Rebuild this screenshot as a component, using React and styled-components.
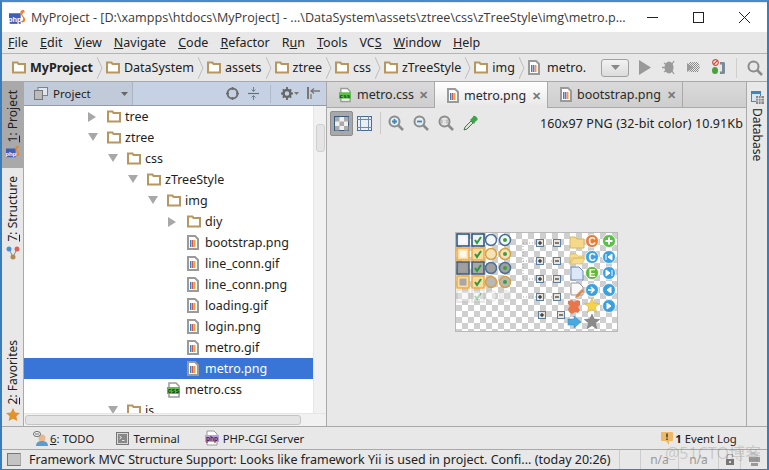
import React from "react";
import styled, { createGlobalStyle } from "styled-components";

const GlobalStyle = createGlobalStyle`
  html, body {
    margin: 0;
    padding: 0;
    background: #fff;
  }
  * {
    box-sizing: border-box;
  }
`;

const Window = styled.div`
  position: relative;
  width: 769px;
  height: 470px;
  overflow: hidden;
  display: flex;
  flex-direction: column;
  padding-top: 1px;
  background: #e8e8e8;
  border: 1px solid #3a7dbd;
  border-top-width: 2px;
  border-left-width: 2px;
  border-right-width: 2px;
  border-top-color: #4a8ac8;
  font-family: "Noto Sans", "Open Sans", sans-serif;
  font-size: 12.5px;
  color: #222;
  white-space: nowrap;
`;

const TitleBar = styled.div`
  height: 29px;
  flex: none;
  background: #fff;
  display: flex;
  align-items: center;
  padding-left: 7px;
  font-family: "Open Sans", sans-serif;
  font-size: 12.6px;
  color: #3a3a3a;
`;

const TitleText = styled.span`
  flex: 1;
  padding-left: 5px;
`;

const WinButton = styled.div`
  width: 46px;
  height: 29px;
  display: flex;
  align-items: center;
  justify-content: center;
`;

const MenuBar = styled.div`
  height: 22px;
  flex: none;
  display: flex;
  align-items: center;
  gap: 12px;
  padding-left: 6px;
  border-bottom: 1px solid #b4b4b4;
`;

const NavBar = styled.div`
  height: 28px;
  flex: none;
  display: flex;
  align-items: center;
  padding-left: 10px;
  border-bottom: 1px solid #a9a9a9;
`;

const Crumb = styled.div`
  display: flex;
  flex: none;
  align-items: center;
  gap: 4px;
  font-weight: ${(p) => (p.$bold ? 700 : 400)};
`;

const Chevron = styled.svg`
  margin: 0 3px 0 4px;
  flex: none;
`;

const ComboButton = styled.div`
  width: 28px;
  height: 18px;
  flex: none;
  margin-left: 15px;
  margin-right: 10px;
  border: 1px solid #a0a0a0;
  border-radius: 3px;
  background: linear-gradient(#f2f2f2, #dcdcdc);
  display: flex;
  align-items: center;
  justify-content: center;
`;

const NavActions = styled.div`
  display: flex;
  flex: none;
  align-items: center;
  gap: 10px;
`;

const NavDivider = styled.div`
  width: 1px;
  height: 20px;
  background: #cfcfcf;
`;

const Main = styled.div`
  flex: 1;
  min-height: 0;
  display: flex;
`;

const SideStrip = styled.div`
  width: ${(p) => p.$width}px;
  flex: none;
  display: flex;
  flex-direction: column;
  font-size: 12px;
  ${(p) => (p.$right ? "border-left: 1px solid #a9a9a9;" : "border-right: 1px solid #a9a9a9;")}
`;

const StripButton = styled.div`
  display: flex;
  flex-direction: column;
  align-items: center;
  gap: ${(p) => p.$gap || 4}px;
  background: ${(p) => (p.$active ? "#a9a9a9" : "transparent")};
  padding: ${(p) => p.$pad || "0"};
  margin-top: ${(p) => p.$top || 0}px;
`;

const VerticalText = styled.span`
  writing-mode: vertical-rl;
  transform: ${(p) => (p.$down ? "none" : "rotate(180deg)")};
  line-height: 20px;
`;

const ProjectPanel = styled.div`
  width: 303px;
  flex: none;
  position: relative;
  display: flex;
  flex-direction: column;
  background: #fff;
  border-right: 1px solid #a9a9a9;
`;

const PanelHeader = styled.div`
  height: 24px;
  flex: none;
  display: flex;
  align-items: center;
  background: #c6d2e3;
  border-bottom: 1px solid #9a9a9a;
`;

const PanelCombo = styled.div`
  width: 109px;
  height: 23px;
  flex: none;
  display: flex;
  align-items: center;
  padding-left: 10px;
  gap: 5px;
  font-size: 11.5px;
  background: #c0cad8;
  border-right: 1px solid #a9b4c4;
  margin-right: 93px;
`;

const ComboLabel = styled.span`
  flex: 1;
`;

const HeaderTools = styled.div`
  display: flex;
  align-items: center;
  gap: 8px;
`;

const HeaderDivider = styled.div`
  width: 1px;
  height: 18px;
  background: #aeb9c9;
  margin: 0 2px;
`;

const TreeArea = styled.div`
  flex: 1;
  min-height: 0;
  display: flex;
  overflow: hidden;
`;

const Tree = styled.div`
  flex: 1;
  min-width: 0;
  overflow: hidden;
`;

const Row = styled.div`
  height: 21px;
  display: flex;
  align-items: center;
  padding-left: ${(p) => 64 + p.$depth * 20}px;
  background: ${(p) => (p.$selected ? "#3875d7" : "transparent")};
  color: ${(p) => (p.$selected ? "#fff" : "#1e1e1e")};
`;

const ArrowSlot = styled.div`
  width: 19px;
  flex: none;
  display: flex;
  align-items: center;
`;

const IconSlot = styled.div`
  width: 18px;
  flex: none;
  display: flex;
  align-items: center;
`;

const VScrollTrack = styled.div`
  width: 13px;
  flex: none;
  background: #f1f1f1;
  border-left: 1px solid #e6e6e6;
  padding: 18px 1px 0 2px;
`;

const VScrollThumb = styled.div`
  height: 28px;
  background: #e4e4e4;
  border: 1px solid #cfcfcf;
  border-radius: 3px;
`;

const HScrollTrack = styled.div`
  position: absolute;
  left: 0;
  right: 0;
  bottom: 0;
  height: 13px;
  background: #f1f1f1;
  border-top: 1px solid #e6e6e6;
  padding: 1px 25px 1px 1px;
`;

const HScrollThumb = styled.div`
  height: 10px;
  background: #e4e4e4;
  border: 1px solid #c4c4c4;
  border-radius: 3px;
`;

const Editor = styled.div`
  flex: 1;
  min-width: 0;
  display: flex;
  flex-direction: column;
`;

const TabBar = styled.div`
  height: 26px;
  flex: none;
  display: flex;
  padding-left: 3px;
  background: linear-gradient(#dadada, #cecece);
  border-bottom: 1px solid #a9a9a9;
`;

const Tab = styled.div`
  display: flex;
  align-items: center;
  gap: 5px;
  width: ${(p) => p.$width}px;
  padding-left: ${(p) => p.$pad}px;
  border-right: 1px solid #a9a9a9;
  background: ${(p) => (p.$active ? "linear-gradient(#ffffff, #e6e6e6)" : "transparent")};
  margin-bottom: ${(p) => (p.$active ? "-1px" : "0")};
  color: #2a2a2a;
`;

const TabClose = styled.span`
  font-size: 11px;
  font-weight: 700;
  color: #777;
  margin-left: auto;
  margin-right: 6px;
`;

const ViewerToolbar = styled.div`
  height: 30px;
  flex: none;
  display: flex;
  align-items: center;
  padding-left: 3px;
`;

const ToggleButton = styled.div`
  width: 23px;
  height: 25px;
  display: flex;
  align-items: center;
  justify-content: center;
  border-radius: 2px;
  background: ${(p) => (p.$pressed ? "#a8a8a8" : "transparent")};
  border: 1px solid ${(p) => (p.$pressed ? "#8e8e8e" : "transparent")};
`;

const ToolDivider = styled.div`
  width: 1px;
  height: 22px;
  background: #cacaca;
  margin: 0 7px 0 4px;
`;

const ZoomTools = styled.div`
  display: flex;
  align-items: center;
  gap: 9px;
`;

const ImageInfo = styled.div`
  margin-left: auto;
  margin-right: 3px;
  letter-spacing: 0.1px;
  color: #222;
`;

const Canvas = styled.div`
  flex: 1;
  display: flex;
  align-items: center;
  justify-content: center;
  padding-bottom: 1px;
`;

const ToolWindowBar = styled.div`
  height: 24px;
  flex: none;
  display: flex;
  align-items: center;
  padding-left: 31px;
  border-top: 1px solid #a9a9a9;
  border-bottom: 1px solid #a9a9a9;
  font-size: 11.3px;
`;

const ToolButton = styled.div`
  display: flex;
  align-items: center;
  gap: ${(p) => p.$gap || 4}px;
  margin-right: ${(p) => p.$after || 0}px;
`;

const StatusBar = styled.div`
  height: 19px;
  flex: none;
  display: flex;
  align-items: center;
  padding-left: 5px;
  font-size: 12.5px;
`;

const StatusSquare = styled.div`
  width: 14px;
  height: 13px;
  background: #c4c4c4;
  border: 1px solid #777;
  border-right-color: #aaa;
  margin-right: 8px;
`;

const StatusText = styled.span`
  flex: 1;
`;

const StatusCell = styled.div`
  width: ${(p) => p.$width}px;
  height: 100%;
  display: flex;
  align-items: center;
  justify-content: center;
  border-left: 1px solid #cdcdcd;
  color: #9a9a9a;
  font-size: 12px;
`;

const Watermark = styled.div`
  position: absolute;
  right: 6px;
  bottom: 5px;
  font-family: "Open Sans", "Noto Sans CJK SC", sans-serif;
  font-size: 16px;
  color: rgba(120, 120, 120, 0.3);
`;

const Folder = () => (
  <svg width="14" height="13" viewBox="0 0 14 13">
    <path d="M1 11.500V1.500h4.500l1 1.500H13v8.500z" fill="#fff" stroke="#b8965f" strokeWidth="2" />
  </svg>
);

const Bars = ({ x, y }) => (
  <g>
    <rect x={x} y={y} width="1.500" height="7" fill="#3b7fc4" />
    <rect x={x + 2} y={y} width="1.500" height="7" fill="#d9534f" />
    <rect x={x + 4} y={y} width="1.500" height="7" fill="#e6a23c" />
  </g>
);

const PngFile = () => (
  <svg width="12" height="15" viewBox="0 0 12 15">
    <path d="M1 1h7l3 3v10H1z" fill="#fff" stroke="#9a9a9a" strokeWidth="2" />
    <Bars x={3} y={5} />
  </svg>
);

const CssFile = ({ size = 14 }) => (
  <svg width={size} height="16" viewBox="0 0 14 16">
    <path d="M2 1h7l3 3v11H2z" fill="#fff" stroke="#9a9a9a" strokeWidth="1.500" />
    <rect x="0" y="5" width="13" height="7" fill="#5ec04a" />
    <text x="6.500" y="11" textAnchor="middle" fontSize="6.500" fontWeight="700" fontFamily="Liberation Mono" fill="#0c3a0c">css</text>
  </svg>
);

const ArrowRight = () => (
  <svg width="9" height="10" viewBox="0 0 9 10"><path d="M0 0l8 5-8 5z" fill="#a8a8a8" /></svg>
);

const ArrowDown = () => (
  <svg width="10" height="9" viewBox="0 0 10 9"><path d="M0 0h10L5 8z" fill="#a8a8a8" /></svg>
);

const PhpLogo = ({ w = 15 }) => (
  <svg width={w} height={w} viewBox="0 0 16 16">
    <rect x="0" y="4" width="11" height="10" fill="#3d5fb8" />
    <text x="5.500" y="12" textAnchor="middle" fontSize="7" fontWeight="700" fontFamily="Liberation Sans" fill="#fff">php</text>
    <path d="M14 1c-3 0-4 2-3 4l2 3c1 2 0 3-2 4 3 2 5-1 4-3l-2-3c-1-1 0-3 2-3z" fill="#e8842c" />
  </svg>
);

const Search = ({ size = 16, sign }) => (
  <svg width={size} height={size} viewBox="0 0 16 16">
    <circle cx="6.500" cy="6.500" r="5" fill={sign === "plus" || sign === "minus" ? "#e6eef5" : "none"} stroke="#8c8c8c" strokeWidth="2" />
    <path d="M10 10l5 5" stroke="#8c8c8c" strokeWidth="2.500" />
    {sign === "plus" && <path d="M4 6.500h5M6.500 4v5" stroke="#3f86b5" strokeWidth="1.800" />}
    {sign === "minus" && <path d="M4 6.500h5" stroke="#3f86b5" strokeWidth="1.800" />}
    {sign === "one" && <path d="M4 4.500v4M7 5v.5M7 7.500v.5M9 4.500v4" stroke="#999" strokeWidth="1" />}
  </svg>
);

const Bug = () => (
  <svg width="15" height="15" viewBox="0 0 15 15">
    <ellipse cx="8" cy="7.500" rx="4.500" ry="6" fill="#9a9a9a" />
    <path d="M3 3l3 2M1 7.500h4M3 12l3-2M13 1l-2 3M13 14l-2-3" stroke="#9a9a9a" strokeWidth="1.300" />
  </svg>
);

const Coverage = () => (
  <svg width="15" height="15" viewBox="0 0 15 15">
    <defs>
      <pattern id="cov" width="2" height="2" patternUnits="userSpaceOnUse">
        <rect width="1" height="1" fill="#8c8c8c" />
        <rect x="1" y="1" width="1" height="1" fill="#8c8c8c" />
      </pattern>
    </defs>
    <path d="M1 5l3-3h8l2 5-2 5H4l-3-3z" fill="url(#cov)" />
    <path d="M1 3l6 4.500-6 4.500z" fill="#9a9a9a" />
  </svg>
);

const StopBug = () => (
  <svg width="15" height="17" viewBox="0 0 15 17">
    <circle cx="4.500" cy="3.500" r="2.800" fill="#fff" stroke="#d84a3a" strokeWidth="1.200" />
    <path d="M2.500 5.500l4-4" stroke="#d84a3a" strokeWidth="1.200" />
    <ellipse cx="4" cy="11.500" rx="3" ry="3.500" fill="#4aa03a" />
    <path d="M9 3h3.500c1.500 0 1.500 1 1.500 2v8c0 1 0 2-1.500 2H9v-2.500h2v-7H9z" fill="#7a8a96" />
  </svg>
);

const TargetIcon = () => (
  <svg width="13" height="13" viewBox="0 0 13 13">
    <circle cx="6.500" cy="6.500" r="5" fill="none" stroke="#6e6e6e" strokeWidth="2" />
    <path d="M6.500 0v3M6.500 10v3M0 6.500h3M10 6.500h3" stroke="#6e6e6e" strokeWidth="1.500" />
  </svg>
);

const CollapseIcon = () => (
  <svg width="13" height="13" viewBox="0 0 13 13">
    <path d="M1 6.500h11" stroke="#6e6e6e" strokeWidth="1.200" />
    <path d="M6.500 0v4M4.500 2.500l2 2 2-2M6.500 13V9M4.500 10.500l2-2 2 2" fill="none" stroke="#6e7f92" strokeWidth="1" />
  </svg>
);

const GearIcon = () => (
  <svg width="18" height="13" viewBox="0 0 18 13">
    <circle cx="6" cy="6.500" r="3.500" fill="none" stroke="#666" strokeWidth="2.500" />
    <path d="M6 0v2.500M6 10.500V13M0 6.500h2.500M9.500 6.500H12M1.800 2.300l1.800 1.800M8.400 8.900l1.800 1.800M10.200 2.300L8.400 4.100M3.600 8.900l-1.800 1.800" stroke="#666" strokeWidth="1.800" />
    <path d="M13 5h5l-2.500 3z" fill="#777" />
  </svg>
);

const HideIcon = () => (
  <svg width="13" height="13" viewBox="0 0 13 13">
    <rect x="0" y="0" width="2" height="12" fill="#777" />
    <path d="M4 4h9M7 1.500L4 4l3 2.500" fill="none" stroke="#777" strokeWidth="1.300" />
    <rect x="3" y="7" width="2" height="5" fill="#999" />
  </svg>
);

const CheckerIcon = () => (
  <svg width="15" height="15" viewBox="0 0 15 15">
    <rect x="0.500" y="0.500" width="14" height="14" fill="#f0f0f0" stroke="#3a5a80" />
    <rect x="1" y="1" width="4.500" height="4.500" fill="#aaa" />
    <rect x="10" y="1" width="4.500" height="4.500" fill="#aaa" />
    <rect x="5.500" y="5.500" width="4.500" height="4.500" fill="#aaa" />
    <rect x="1" y="10" width="4.500" height="4.500" fill="#aaa" />
    <rect x="10" y="10" width="4.500" height="4.500" fill="#aaa" />
  </svg>
);

const GridIcon = () => (
  <svg width="15" height="15" viewBox="0 0 15 15">
    <rect x="0.500" y="0.500" width="14" height="14" fill="#e8eef5" stroke="#4a6a90" />
    <path d="M3.500 0v15M11.500 0v15M0 3.500h15M0 11.500h15" stroke="#6e88a8" />
  </svg>
);

const Eyedropper = () => (
  <svg width="16" height="16" viewBox="0 0 16 16">
    <path d="M1 15l1-3 6-6 2 2-6 6z" fill="#d8e8d0" stroke="#55705a" />
    <path d="M7 5l4 4 1.500-2.500 2-1.500c1-1.500-2.500-5-4-4L9 3z" fill="#3fa34a" />
  </svg>
);

const DatabaseIcon = () => (
  <svg width="13" height="13" viewBox="0 0 13 13">
    <rect x="0.500" y="0.500" width="9" height="10" fill="#d6e6f4" stroke="#3f86c0" />
    <rect x="0" y="0" width="10" height="3" fill="#3f86c0" />
    <rect x="5" y="5" width="8" height="8" fill="#8a8a8a" />
    <path d="M5 7.500h8M5 10h8M7.500 5v8M10 5v8" stroke="#e8e8e8" strokeWidth="0.700" />
  </svg>
);

const StructureIcon = () => (
  <svg width="14" height="14" viewBox="0 0 14 14">
    <path d="M3 3l4 8 4-8" fill="none" stroke="#888" strokeWidth="1" />
    <circle cx="3" cy="3" r="2.500" fill="#4d8fd0" />
    <circle cx="11" cy="3" r="2.500" fill="#d9635a" />
    <circle cx="7" cy="11" r="2.500" fill="#b08a50" />
  </svg>
);

const StarIcon = () => (
  <svg width="14" height="13" viewBox="0 0 14 13">
    <path d="M7 0l2.100 4.400 4.900.6-3.600 3.300.9 4.700L7 10.700 2.700 13l.9-4.700L0 5l4.900-.6z" fill="#e3932c" />
  </svg>
);

const TodoIcon = () => (
  <svg width="15" height="15" viewBox="0 0 15 15">
    <circle cx="9" cy="7" r="3.500" fill="#e8b888" />
    <path d="M3 15c0-4 3-5 6-5s6 1 6 5z" fill="#5b9bd0" />
    <ellipse cx="4" cy="3" rx="3.500" ry="2.500" fill="#fff" stroke="#666" />
    <path d="M2 3h4" stroke="#666" />
  </svg>
);

const TerminalIcon = () => (
  <svg width="13" height="13" viewBox="0 0 13 13">
    <rect x="0.500" y="0.500" width="12" height="12" fill="#d8d8d8" stroke="#777" />
    <rect x="2" y="2" width="9" height="9" fill="#888" />
    <path d="M3.500 4l2 1.500-2 1.500M6 8.500h2.500" fill="none" stroke="#fff" strokeWidth="0.800" />
  </svg>
);

const PhpFile = () => (
  <svg width="14" height="16" viewBox="0 0 14 16">
    <path d="M2 1h7l3 3v11H2z" fill="#fff" stroke="#9a9a9a" />
    <rect x="0" y="5" width="14" height="7" fill="#b3a3e6" />
    <text x="7" y="11" textAnchor="middle" fontSize="6.500" fontWeight="700" fontFamily="Liberation Sans" fill="#2a2060">php</text>
  </svg>
);

const EventIcon = () => (
  <svg width="12" height="13" viewBox="0 0 12 13">
    <path d="M1 0h10a1 1 0 0 1 1 1v7a1 1 0 0 1-1 1H8v4L5 9H1a1 1 0 0 1-1-1V1a1 1 0 0 1 1-1z" fill="#eeb866" />
    <path d="M6 1.500v4M6 6.500v1.500" stroke="#333" strokeWidth="1.400" />
  </svg>
);

const LockIcon = () => (
  <svg width="10" height="11" viewBox="0 0 10 11">
    <path d="M2 5V3a3 3 0 0 1 6 0" fill="none" stroke="#999" strokeWidth="1.200" />
    <rect x="1" y="5" width="8" height="6" fill="#777" />
    <rect x="4" y="7" width="2" height="2" fill="#ddd" />
  </svg>
);

const HeapIcon = () => (
  <svg width="13" height="15" viewBox="0 0 13 15">
    <path d="M1 1h11M3 3h7" stroke="#bbb" />
    <path d="M1 5h11v5H1z" fill="#9a9a9a" />
    <path d="M3 11h7v3H3z" fill="#999" />
  </svg>
);

/* --- the sprite sheet shown in the image viewer --- */

const boxRows = [
  { y: 7, fill: "#eef2f6", inner: "#f8f8f8", stroke: "#24507f", radio: "#f4f7fa", ring: "#4a6f96" },
  { y: 21, fill: "#fbdca0", inner: "#fff8e8", stroke: "#efab45", radio: "#f6e2b8", ring: "#d8a040" },
  { y: 35, fill: "#9c9c9c", inner: "#a0a0a0", stroke: "#3f5a78", radio: "#a0a0a0", ring: "#4a6f96" },
  { y: 49, fill: "#fbdca0", inner: "#a8a8a8", stroke: "#efab45", radio: "#b8b8b8", ring: "#d8a040" },
];

const Box = ({ x, y, fill, inner, stroke, check, faded }) => (
  <g opacity={faded ? 0.4 : 1}>
    <rect x={x - 6} y={y - 6} width="12" height="12" fill={fill} stroke={stroke} strokeWidth="1.500" />
    {inner && <rect x={x - 3.500} y={y - 3.500} width="7" height="7" fill={inner} />}
    {check && <path d={`M${x - 3} ${y}l2 3 4-6`} fill="none" stroke="#2a9a3a" strokeWidth="2" />}
  </g>
);

const Radio = ({ x, y, fill, stroke, dot, faded }) => (
  <g opacity={faded ? 0.4 : 1}>
    <circle cx={x} cy={y} r="5.500" fill={fill} stroke={stroke} strokeWidth="1.500" />
    {dot && <circle cx={x} cy={y} r="2" fill="#3aa03a" />}
  </g>
);

const PlusMinus = ({ x, y, plus }) => (
  <g>
    <rect x={x - 3.500} y={y - 3.500} width="7" height="7" fill="#e8e4dc" stroke="#5a7fa0" />
    <path d={`M${x - 2} ${y}h4${plus ? `M${x} ${y - 2}v4` : ""}`} stroke="#111" strokeWidth="1" />
  </g>
);

const Ball = ({ x, y, fill, children }) => (
  <g>
    <circle cx={x} cy={y} r="6.500" fill={fill} stroke="#fff" strokeWidth="0.800" />
    {children}
  </g>
);

const starPath = (x, y, r) => {
  const pts = [];
  for (let i = 0; i < 10; i++) {
    const rad = i % 2 === 0 ? r : r * 0.45;
    const a = -Math.PI / 2 + (i * Math.PI) / 5;
    pts.push(`${(x + rad * Math.cos(a)).toFixed(1)},${(y + rad * Math.sin(a)).toFixed(1)}`);
  }
  return `M${pts.join("L")}z`;
};

const ballLetter = (x, y, s) => (
  <text x={x} y={y + 3.500} textAnchor="middle" fontSize="10" fontWeight="700" fontFamily="Liberation Sans" fill="#fff">{s}</text>
);

const Sprite = () => (
  <svg width="163" height="100" viewBox="-1 -1 163 100">
    <defs>
      <pattern id="checks" width="12" height="12" patternUnits="userSpaceOnUse">
        <rect width="12" height="12" fill="#fff" />
        <rect width="6" height="6" fill="#cfcfcf" />
        <rect x="6" y="6" width="6" height="6" fill="#cfcfcf" />
      </pattern>
    </defs>
    <rect x="-0.500" y="-0.500" width="162" height="99" fill="url(#checks)" stroke="#b9b9b9" />
    {boxRows.map((r) => (
      <g key={r.y}>
        <Box x={7} y={r.y} fill={r.fill} inner={r.inner} stroke={r.stroke} />
        <Box x={22} y={r.y} fill={r.y === 35 ? "#a8a8a8" : r.fill} stroke={r.stroke} check />
        <Radio x={35} y={r.y} fill={r.radio} stroke={r.ring} />
        <Radio x={49} y={r.y} fill={r.radio} stroke={r.ring} dot />
      </g>
    ))}
    <Box x={7} y={63} fill="#f0f0f0" stroke="#bbb" faded />
    <Box x={22} y={63} fill="#f0f0f0" stroke="#bbb" check faded />
    <Radio x={35} y={63} fill="#fff" stroke="#ccc" faded />
    <Radio x={49} y={63} fill="#ddd" stroke="#ccc" faded />
    {[10, 28, 46, 64].map((y) => (
      <g key={y}>
        <path d={`M67 ${y}h14M99 ${y}h-6`} stroke="#aaa" strokeDasharray="1 2" />
        <PlusMinus x={84} y={y} plus />
        <PlusMinus x={101} y={y} />
      </g>
    ))}
    <path d="M67 10v36" stroke="#aaa" strokeDasharray="1 2" />
    <PlusMinus x={86} y={82} plus />
    <PlusMinus x={105} y={82} />
    <path d="M114 4h5l2 2h7v9h-14z" fill="#f4d98a" stroke="#d8b860" />
    <path d="M114 29v-8h6l2 2h6v2h-10l-3 5zM113 31l3-6h13l-3 6z" fill="#f6dc90" stroke="#d8b860" strokeWidth="0.700" />
    <path d="M115 34h8l4 4v9h-12z" fill="#dce8f8" stroke="#6a8ac0" />
    <path d="M115 50h8l4 4v8h-12z" fill="#f8f8f8" stroke="#999" />
    <path d="M120 62l6-6 2 2-6 6-3 1z" fill="#e08a4a" />
    <path d="M112 68l4-1 2 2 3-2 3 1v4l-2 2 2 3-2 3-3-1-3 2-3-2-1-3 2-3-2-2z" fill="#e8764a" />
    <path d="M112 86h6v-3l7 6-7 6v-3h-6z" fill="#4aa8e0" stroke="#2a88c0" strokeWidth="0.500" />
    <Ball x={136} y={8} fill="#e87a3a">{ballLetter(136, 8, "C")}</Ball>
    <Ball x={136} y={24} fill="#3aa0e0">{ballLetter(136, 24, "C")}</Ball>
    <Ball x={136} y={40} fill="#5ab83a">{ballLetter(136, 40, "E")}</Ball>
    <Ball x={136} y={57} fill="#3aa0e0"><path d="M132 57h5M135 54l3 3-3 3" fill="none" stroke="#fff" strokeWidth="1.600" /></Ball>
    <path d={starPath(136, 73, 8)} fill="#f4d24a" stroke="#d8a83a" strokeWidth="0.500" />
    <path d={starPath(136, 89, 8)} fill="#8a8a8a" stroke="#6a6a6a" strokeWidth="0.500" />
    <Ball x={153} y={8} fill="#5ac04a"><path d="M149.500 8h7M153 4.500v7" stroke="#fff" strokeWidth="2" /></Ball>
    <Ball x={153} y={24} fill="#3aa0e0"><path d="M150 21v6M156 21l-4 3 4 3z" fill="#fff" stroke="#fff" /></Ball>
    <Ball x={153} y={40} fill="#3aa0e0"><path d="M156 37v6M150 37l4 3-4 3z" fill="#fff" stroke="#fff" /></Ball>
    <Ball x={153} y={57} fill="#3aa0e0"><path d="M155 54l-4 3 4 3z" fill="#fff" stroke="#fff" /></Ball>
    <Ball x={153} y={73} fill="#3aa0e0"><path d="M151 70l4 3-4 3z" fill="#fff" stroke="#fff" /></Ball>
  </svg>
);

const crumbs = ["DataSystem", "assets", "ztree", "css", "zTreeStyle", "img"];
const menus = [
  ["F", "ile"], ["E", "dit"], ["V", "iew"], ["N", "avigate"], ["C", "ode"], ["R", "efactor"],
  ["R", "u", "n"], ["T", "ools"], ["VC", "S", ""], ["W", "indow"], ["H", "elp"],
];

const treeRows = [
  { depth: 0, label: "tree", kind: "closed" },
  { depth: 0, label: "ztree", kind: "open" },
  { depth: 1, label: "css", kind: "open" },
  { depth: 2, label: "zTreeStyle", kind: "open" },
  { depth: 3, label: "img", kind: "open" },
  { depth: 4, label: "diy", kind: "closed" },
  { depth: 4, label: "bootstrap.png", kind: "png" },
  { depth: 4, label: "line_conn.gif", kind: "png" },
  { depth: 4, label: "line_conn.png", kind: "png" },
  { depth: 4, label: "loading.gif", kind: "png" },
  { depth: 4, label: "login.png", kind: "png" },
  { depth: 4, label: "metro.gif", kind: "png" },
  { depth: 4, label: "metro.png", kind: "png", selected: true },
  { depth: 3, label: "metro.css", kind: "css" },
  { depth: 1, label: "js", kind: "open" },
];

const MenuLabel = ({ item }) => {
  if (item[0] === "R" && item.length === 3) return <span>R<u>u</u>n</span>;
  if (item[0] === "VC") return <span>VC<u>S</u></span>;
  return <span><u>{item[0]}</u>{item[1]}</span>;
};

const TreeRow = ({ row }) => (
  <Row $depth={row.depth} $selected={row.selected}>
    <ArrowSlot>
      {row.kind === "closed" && <ArrowRight />}
      {row.kind === "open" && <ArrowDown />}
    </ArrowSlot>
    <IconSlot>
      {(row.kind === "closed" || row.kind === "open") && <Folder />}
      {row.kind === "png" && <PngFile />}
      {row.kind === "css" && <CssFile />}
    </IconSlot>
    {row.label}
  </Row>
);

const ChevronMark = () => (
  <Chevron width="6" height="22" viewBox="0 0 6 22">
    <path d="M0 0l5 11-5 11" fill="none" stroke="#bdbdbd" />
  </Chevron>
);

const App = () => {
  return (
    <Window>
      <GlobalStyle />
      <TitleBar>
        <PhpLogo w={17} />
        <TitleText>MyProject - [D:\xampps\htdocs\MyProject] - ...\DataSystem\assets\ztree\css\zTreeStyle\img\metro.p...</TitleText>
        <WinButton>
          <svg width="11" height="11" viewBox="0 0 11 11"><path d="M0 5.500h11" stroke="#222" /></svg>
        </WinButton>
        <WinButton>
          <svg width="11" height="11" viewBox="0 0 11 11"><rect x="0.500" y="0.500" width="10" height="10" fill="none" stroke="#222" /></svg>
        </WinButton>
        <WinButton>
          <svg width="11" height="11" viewBox="0 0 11 11"><path d="M0 0l11 11M11 0L0 11" stroke="#222" /></svg>
        </WinButton>
      </TitleBar>

      <MenuBar>
        {menus.map((m) => (
          <MenuLabel key={m.join("")} item={m} />
        ))}
      </MenuBar>

      <NavBar>
        <Crumb $bold>
          <Folder />
          MyProject
        </Crumb>
        <ChevronMark />
        {crumbs.map((c) => (
          <React.Fragment key={c}>
            <Crumb>
              <Folder />
              {c}
            </Crumb>
            <ChevronMark />
          </React.Fragment>
        ))}
        <Crumb>
          <PngFile />
          &nbsp;metro.
        </Crumb>
        <ComboButton>
          <svg width="9" height="5" viewBox="0 0 9 5"><path d="M0 0h9L4.500 5z" fill="#888" /></svg>
        </ComboButton>
        <NavActions>
          <svg width="12" height="15" viewBox="0 0 12 15"><path d="M0 0l12 7.500L0 15z" fill="#999" /></svg>
          <Bug />
          <Coverage />
          <StopBug />
          <NavDivider />
          <Search size={16} />
        </NavActions>
      </NavBar>

      <Main>
        <SideStrip $width={22}>
          <StripButton $active $pad="8px 0 9px" $gap={3}>
            <VerticalText><u>1</u>: Project</VerticalText>
            <PhpLogo w={14} />
          </StripButton>
          <StripButton $top={8}>
            <VerticalText><u>7</u>: Structure</VerticalText>
            <StructureIcon />
          </StripButton>
          <StripButton $top={80}>
            <VerticalText><u>2</u>: Favorites</VerticalText>
            <StarIcon />
          </StripButton>
        </SideStrip>

        <ProjectPanel>
          <PanelHeader>
            <PanelCombo>
              <svg width="14" height="13" viewBox="0 0 14 13">
                <rect x="4" y="0.500" width="9.500" height="8" fill="#dfe6ee" stroke="#5b8bb5" />
                <rect x="0.500" y="3.500" width="8" height="9" fill="#bbb" stroke="#777" />
              </svg>
              <ComboLabel>Project</ComboLabel>
              <svg width="7" height="4" viewBox="0 0 7 4" style={{ marginRight: 4 }}><path d="M0 0h7L3.500 4z" fill="#666" /></svg>
            </PanelCombo>
            <HeaderTools>
              <TargetIcon />
              <CollapseIcon />
              <HeaderDivider />
              <GearIcon />
              <HideIcon />
            </HeaderTools>
          </PanelHeader>
          <TreeArea>
            <Tree>
              {treeRows.map((r) => (
                <TreeRow key={r.label} row={r} />
              ))}
            </Tree>
            <VScrollTrack>
              <VScrollThumb />
            </VScrollTrack>
          </TreeArea>
          <HScrollTrack>
            <HScrollThumb />
          </HScrollTrack>
        </ProjectPanel>

        <Editor>
          <TabBar>
            <Tab $width={105} $pad={9}>
              <CssFile />
              metro.css
              <TabClose>✕</TabClose>
            </Tab>
            <Tab $active $width={113} $pad={12}>
              <PngFile />
              metro.png
              <TabClose>✕</TabClose>
            </Tab>
            <Tab $width={135} $pad={12}>
              <PngFile />
              bootstrap.png
              <TabClose>✕</TabClose>
            </Tab>
          </TabBar>
          <ViewerToolbar>
            <ToggleButton $pressed><CheckerIcon /></ToggleButton>
            <ToggleButton><GridIcon /></ToggleButton>
            <ToolDivider />
            <ZoomTools>
              <Search sign="plus" />
              <Search sign="minus" />
              <Search sign="one" />
              <Eyedropper />
            </ZoomTools>
            <ImageInfo>160x97 PNG (32-bit color) 10.91Kb</ImageInfo>
          </ViewerToolbar>
          <Canvas>
            <Sprite />
          </Canvas>
        </Editor>

        <SideStrip $width={21} $right>
          <StripButton $pad="9px 0 0" $gap={4}>
            <DatabaseIcon />
            <VerticalText $down>Database</VerticalText>
          </StripButton>
        </SideStrip>
      </Main>

      <ToolWindowBar>
        <ToolButton $after={22} $gap={2}><TodoIcon /><span><u>6</u>: TODO</span></ToolButton>
        <ToolButton $after={25}><TerminalIcon /><span>Terminal</span></ToolButton>
        <ToolButton $after={357}><PhpFile /><span>PHP-CGI Server</span></ToolButton>
        <ToolButton $gap={2}><EventIcon /><span><b>1</b>&nbsp;Event Log</span></ToolButton>
      </ToolWindowBar>

      <StatusBar>
        <StatusSquare />
        <StatusText>Framework MVC Structure Support: Looks like framework Yii is used in project. Confi... (today 20:26)</StatusText>
        <StatusCell $width={21} />
        <StatusCell $width={38}>n/a</StatusCell>
        <StatusCell $width={40}>n/a</StatusCell>
        <StatusCell $width={22}><LockIcon /></StatusCell>
        <StatusCell $width={27}><HeapIcon /></StatusCell>
      </StatusBar>

      <Watermark>@51CTO博客</Watermark>
    </Window>
  );
};

export default App;
